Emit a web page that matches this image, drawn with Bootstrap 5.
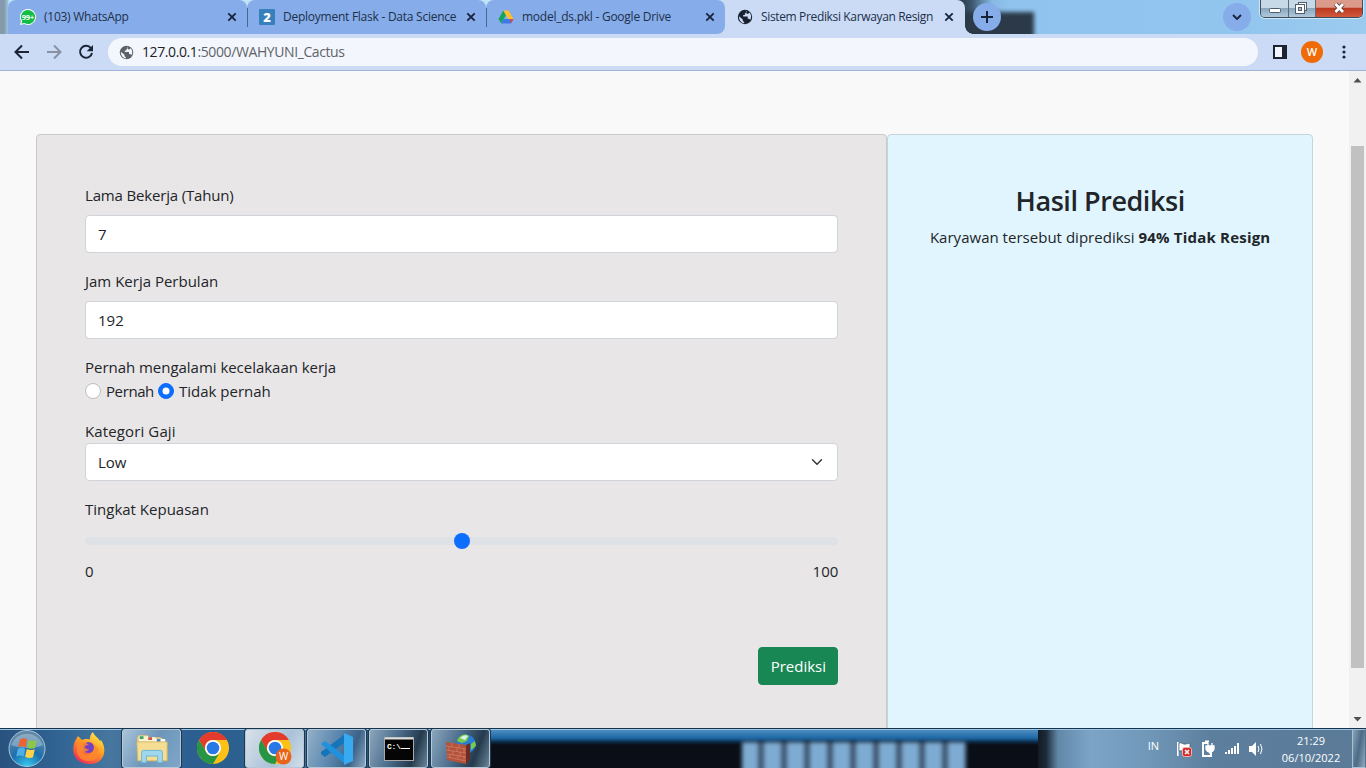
<!DOCTYPE html>
<html lang="id">
<head>
<meta charset="utf-8">
<meta name="viewport" content="width=device-width, initial-scale=1">
<title>Sistem Prediksi Karwayan Resign</title>
<link rel="stylesheet" href="https://cdn.jsdelivr.net/npm/bootstrap@5.3.0/dist/css/bootstrap.min.css">
<style>
body{font-family:"Open Sans","Noto Sans",sans-serif;font-size:15px;line-height:24px;color:#212529;width:1366px;height:768px;overflow:hidden}
.desk{height:768px}
svg{display:block;flex:none}
/* tab strip */
.strip{height:34px;background:#a5d3f3;position:relative}
.shade{position:absolute;left:955px;top:12px;width:79px;height:30px;background:#2b3948;filter:blur(2px)}
.strip-bg{background:linear-gradient(90deg,#2f4254 0 14px,#3d5870 22px,#86b8e3 42px,#90c4ef 60px,#92c5ee 70%,#9ccbef);position:absolute;left:950px;right:0;top:0;height:34px}
.clip-sky{position:absolute;inset:0;overflow:hidden}
.tab-item{width:239px;height:34px;background:#86ace9;border-radius:8px 8px 0 0;font-size:12px;color:#20304a;padding-left:12px;padding-right:10px;position:relative}
.tab-item+.tab-item:not(.on)::before{content:"";position:absolute;left:0;top:8px;width:1px;height:19px;background:#4c6590}
.tab-item.on{background:#cbdbf5;width:240px;padding-right:11px}
.tab-item.on::after{content:"";position:absolute;left:100%;bottom:0;width:8px;height:8px;background:radial-gradient(circle at 100% 0,transparent 7.5px,#cbdbf5 8px)}
.tab-item.prev{border-radius:8px 8px 8px 0}
.underlay{background:linear-gradient(90deg,#8599ac 0 4px,#9dc4dc 8px,#bfe4f7 9px 715px,#cbdbf5 715px 740px,transparent 740px);width:965px;position:relative;padding-left:8px}
.tab-text{margin-left:8px;white-space:nowrap;line-height:34px;flex:1 1 0;letter-spacing:-.25px}
.round-btn{width:28px;height:28px;border-radius:50%;background:#86ace9;position:relative}
.winctl{position:absolute;right:3px;top:0;height:18px;width:103px;border:1px solid #3d4c5c;border-top:0;border-radius:0 0 5px 5px;overflow:hidden;box-shadow:0 0 0 1px #cfe6f7}
.winctl>div{height:17px;background:linear-gradient(#c7d9e6 0 45%,#8ba7bd 50%,#b0c9dc);border-right:1px solid #5d6c7b}
.winctl>.shut{background:linear-gradient(#dc9a8b 0 42%,#bd3a20 50%,#d0593d);border:0}
/* toolbar */
.tools{height:37px;background:#cbdbf5;border-bottom:1px solid #9fb3d6}
.omni{height:28px;width:1150px;border-radius:14px;background:#f3f7fd;font-size:14px;color:#5f6368;padding-left:11px;letter-spacing:-.4px}
.omni b{font-weight:400;color:#202124}
.avatar-w{width:22px;height:22px;border-radius:50%;background:#f06a05;color:#fff;font-size:11px;font-weight:600;line-height:22px;text-align:center}
/* page */
.page{height:657px;background:#f9f9f9;overflow:hidden}
.view{padding:63px 36px 0}
.pane{height:680px;border-radius:4px;border-color:#c9c9cb;color:#212529}
.pane-form{background:#e9e6e7}
.pane-out{background:#e1f5fe;border-color:#c3d6de;text-align:center;padding:48px 16px}
.form-control,.form-select{font-size:15px;line-height:24px;border-radius:4px;height:38px;color:#212529;border-color:#ced4da}
.form-select{background-position:right 12px center}
.form-check-input{margin:4px 0 0;width:16px;height:16px;background-size:100%;flex:none}
.form-check-input:not(:checked){border-color:#bfbfbf}
.form-range{display:block;height:24px}
.form-range::-webkit-slider-runnable-track{background:#dee2e6}
.opt-text{margin-left:5px;white-space:nowrap}
.opt-first{width:48px;letter-spacing:-.4px}
.opt-next{margin-left:4px}
.scale-row{margin-top:6px;margin-bottom:64px;height:24px}
.btn-run{font-size:15px;line-height:24px;height:38px;width:80px;padding:6px 0;border-radius:4px}
.pane-out h1{font-size:27px;font-weight:600;line-height:34px;margin:1px 0 7px;letter-spacing:-.45px}
.result{letter-spacing:.02px}
.result b{letter-spacing:.2px}
.snug{letter-spacing:-.17px}
.sbar{width:17px;background:#f1f1f1}
.thumb{width:13px;height:522px;background:#c1c1c1;margin:58px auto 0}
/* taskbar */
.taskbar{height:40px;border-top:1px solid #16344d;position:relative;overflow:hidden;
 background:linear-gradient(#9dc6e4 0 1px,transparent 1px),
 linear-gradient(90deg,#29527e 0,#316493 60px,#47779f 110px,#2d5e91 190px,#2b608f 240px,#4173a1 300px,#34638e 340px,#1b4266 400px,#1f4d74 490px,transparent 500px 1030px,#12181f 1036px,#1c2a38 1046px,#6288a8 1058px,#7ba4c6 1090px,#7097b8 1150px,#5d7f9e 1210px,#5a7a97 1366px)}
.glass-dark{position:absolute;left:488px;top:1px;width:550px;height:39px;background:linear-gradient(#4c8dc1,#1d68a5 8px,#0c2a47 12px,#090e17 15px)}
.keys{position:absolute;left:742px;top:13px;width:224px;height:32px;background:repeating-linear-gradient(90deg,#7eabd2 0 15px,#33465e 18px 20px,#7eabd2 23px);filter:blur(2px)}
.task-btn{width:59px;height:39px;border:1px solid #b5c8d7;border-radius:3px;box-shadow:0 0 0 1px #1e3850;margin-right:3px}
.task-btn.pale{background:linear-gradient(120deg,#a9c3d8,#6d96ba 50%,#7ea6c8)}
.task-btn.lit{background:linear-gradient(120deg,#d8e2ea,#a9c1d8 60%,#d2dfe9)}
.task-btn.mid{background:linear-gradient(110deg,#93b0c9,#5b87ae 45%,#3c6288 75%,#8ba9c2)}
.task-btn.dim{background:linear-gradient(110deg,#8aa6bd,#496a89 45%,#253a4d 75%,#6c8599)}
.tray{color:#fff;font-size:11px;line-height:17px}
.peek{width:14px;height:39px;border:1px solid #a9c0d2;border-right-color:#587185;background:linear-gradient(100deg,#88a3b8,#4b6b86 50%,#91abc0)}
</style>
</head>
<body>
<svg width="0" height="0" class="position-absolute">
 <defs>
  <symbol id="x" viewBox="0 0 10 10"><path d="M1.300 1.300l7.400 7.400M8.700 1.300L1.300 8.700" stroke="#17233a" stroke-width="1.800" fill="none"/></symbol>
  <symbol id="globe" viewBox="0 0 16 16"><circle cx="8" cy="8" r="7.200" fill="currentColor"/><path d="M2 7.200l3.800 3.200v1.500l1.400 1v1.400C4 13.800 1.900 11 2 7.200zM8.500 1.800l1 1.400-1.600 1.300v1.400H6.200v1.500h4.500v2.300h1.500l1 1.200c1.500-2.600 1.200-5.600-.8-7.500l-1.500 1.500-1.400-.5V2z" fill="var(--hole)"/></symbol>
  <symbol id="chrome" viewBox="0 0 32 32"><circle cx="16" cy="16" r="16" fill="#fbc116"/><path d="M2.140 8A16 16 0 0 1 29.860 8H16a8 8 0 0 0-7 12z" fill="#e33b2e"/><path d="M2.140 8A16 16 0 0 0 16 32l7-12a8 8 0 0 1-13.900 0z" fill="#269546"/><circle cx="16" cy="16" r="8" fill="#fff"/><circle cx="16" cy="16" r="6.300" fill="#2878e6"/></symbol>
 </defs>
</svg>
<div class="desk d-flex flex-column">
 <header class="strip d-flex">
  <div class="clip-sky"><div class="strip-bg"></div><div class="shade"></div></div>
  <div class="underlay d-flex">
   <div class="tab-item d-flex align-items-center">
    <svg width="16" height="16" viewBox="0 0 16 16"><path d="M8 0a8 8 0 1 1-3.700 15.100L0 16l1-4A8 8 0 0 1 8 0z" fill="#f1fff4"/><path d="M8 1a7 7 0 1 1-3.500 13L1.500 14.600 2.200 12A7 7 0 0 1 8 1z" fill="#13bd45"/><text x="8" y="10.800" text-anchor="middle" font-size="7.500" font-weight="700" textLength="12.500" fill="#fff">99+</text></svg>
    <span class="tab-text">(103) WhatsApp</span><svg width="10" height="10"><use href="#x"/></svg>
   </div>
   <div class="tab-item d-flex align-items-center">
    <svg width="16" height="16" viewBox="0 0 16 16"><rect width="16" height="16" rx="1" fill="#3780bd"/><text x="8" y="12.500" text-anchor="middle" font-size="13" font-weight="800" fill="#fff">2</text></svg>
    <span class="tab-text">Deployment Flask - Data Science</span><svg width="10" height="10"><use href="#x"/></svg>
   </div>
   <div class="tab-item prev d-flex align-items-center">
    <svg width="16" height="16" viewBox="0 0 16 16"><path d="M5.300 1.500L8 6.200 3.200 14.500.5 9.900z" fill="#14a55a"/><path d="M5.300 1.500h5.300l4.900 8.400h-5.400z" fill="#fbc02d"/><path d="M5.700 9.900h9.800l-2.700 4.600H3.200z" fill="#3d7ae8"/><path d="M12.300 9.900h3.200l-2.700 4.600z" fill="#e94335"/></svg>
    <span class="tab-text">model_ds.pkl - Google Drive</span><svg width="10" height="10"><use href="#x"/></svg>
   </div>
   <div class="tab-item on d-flex align-items-center">
    <svg width="16" height="16" style="color:#172130;--hole:#cbdbf5"><use href="#globe"/></svg>
    <span class="tab-text" style="letter-spacing:-.35px">Sistem Prediksi Karwayan Resign</span><svg width="10" height="10"><use href="#x"/></svg>
   </div>
  </div>
  <div class="d-flex flex-fill pt-1">
   <div class="round-btn d-flex align-items-center justify-content-center ms-2" style="margin-top:-1px"><svg width="12" height="12" viewBox="0 0 12 12"><path d="M6 0v12M0 6h12" stroke="#17233a" stroke-width="2"/></svg></div>
   <div class="round-btn d-flex align-items-center justify-content-center ms-auto" style="margin-right:115px;margin-top:-1px"><svg width="10" height="8" viewBox="0 0 10 8"><path d="M1 2l4 4 4-4" stroke="#17233a" stroke-width="1.900" fill="none"/></svg></div>
  </div>
  <div class="winctl d-flex">
   <div style="width:28px"><svg width="27" height="17"><rect x="8.500" y="8.500" width="11" height="4" rx="1" fill="#fff" stroke="#505d6c"/></svg></div>
   <div style="width:27px"><svg width="26" height="17" fill="#fff" stroke="#505d6c"><rect x="9.500" y="2.500" width="8" height="8"/><rect x="6.500" y="4.500" width="9" height="9"/><rect x="9.500" y="7.500" width="3" height="3" fill="#a9bfd0"/></svg></div>
   <div class="shut flex-fill"><svg width="46" height="17"><path d="M19.500 4l7.500 8M27 4l-7.500 8" stroke="#5a3b3b" stroke-width="4.500"/><path d="M19.500 4l7.500 8M27 4l-7.500 8" stroke="#fff" stroke-width="2.800"/></svg></div>
  </div>
 </header>

 <div class="tools d-flex align-items-center">
  <svg width="108" height="36" viewBox="0 0 108 36" fill="none" stroke="#1c2537" stroke-width="2"><path d="M29 18H16M22 11.500L15.500 18l6.500 6.500"/><path d="M47 18h13M54 11.500l6.500 6.500-6.500 6.500" stroke="#8791a3"/><path d="M91 14.300A6 6 0 1 0 92 19"/><path d="M93 11v6.300h-6.300z" fill="#1c2537" stroke="none"/></svg>
  <div class="omni d-flex align-items-center"><svg width="15" height="15" style="color:#5c6167;--hole:#f3f7fd"><use href="#globe"/></svg><span class="ms-2"><b>127.0.0.1</b>:5000/WAHYUNI_Cactus</span></div>
  <svg width="14" height="14" viewBox="0 0 14 14" style="margin-left:15px"><rect x="1" y="1" width="12" height="12" fill="#f3f7fd" stroke="#1c2331" stroke-width="2"/><path d="M9 1h4v12H9z" fill="#1c2331"/></svg>
  <div class="avatar-w" style="margin-left:14px">W</div>
  <svg width="4" height="14" viewBox="0 0 4 14" fill="#1c2537" style="margin-left:19px"><circle cx="2" cy="2" r="1.600"/><circle cx="2" cy="7" r="1.600"/><circle cx="2" cy="12" r="1.600"/></svg>
 </div>

 <main class="page d-flex">
  <div class="view flex-fill">
   <div class="row g-0">
    <div class="col-8"><form class="card pane pane-form p-5">
     <div class="mb-3"><label class="form-label d-block mb-2 snug">Lama Bekerja (Tahun)</label><input class="form-control" value="7"></div>
     <div class="mb-3"><label class="form-label d-block mb-2">Jam Kerja Perbulan</label><input class="form-control" value="192"></div>
     <div class="mb-3"><div style="letter-spacing:-.03px">Pernah mengalami kecelakaan kerja</div>
      <div class="d-flex"><input class="form-check-input" type="radio" name="k"><label class="opt-text opt-first">Pernah</label><input class="form-check-input opt-next" type="radio" name="k" checked><label class="opt-text">Tidak pernah</label></div></div>
     <div class="mb-3"><div style="letter-spacing:.12px">Kategori Gaji</div><select class="form-select"><option>Low</option></select></div>
     <div><div class="mb-2">Tingkat Kepuasan</div><input type="range" class="form-range" min="0" max="100" value="50">
      <div class="scale-row d-flex justify-content-between"><span>0</span><span>100</span></div></div>
     <div class="text-end"><button type="button" class="btn btn-success btn-run">Prediksi</button></div>
    </form></div>
    <div class="col-4"><section class="card pane pane-out"><h1>Hasil Prediksi</h1><div class="result">Karyawan tersebut diprediksi <b>94% Tidak Resign</b></div></section></div>
   </div>
  </div>
  <div class="sbar d-flex flex-column align-items-center">
   <svg width="17" height="17"><path d="M4.500 11.500l4-4.500 4 4.500z" fill="#505050"/></svg>
   <div class="thumb"></div>
   <svg width="17" height="17" class="mt-auto"><path d="M4.500 6l4 4.500 4-4.500z" fill="#505050"/></svg>
  </div>
 </main>

 <footer class="taskbar d-flex align-items-center">
  <div class="glass-dark"></div><div class="keys"></div>
  <div class="d-flex align-items-center position-relative w-100">
   <svg width="122" height="39" viewBox="0 0 122 39">
    <defs><radialGradient id="orb" cx=".5" cy="1" r=".9"><stop offset="0" stop-color="#38cdf1"/><stop offset=".5" stop-color="#1b6fae"/><stop offset="1" stop-color="#6288a6"/></radialGradient><linearGradient id="ff" x1=".8" y1="0" x2=".2" y2="1"><stop offset="0" stop-color="#fff04d"/><stop offset=".45" stop-color="#ff9b22"/><stop offset="1" stop-color="#f5215d"/></linearGradient></defs>
    <circle cx="27" cy="19.500" r="18" fill="url(#orb)" stroke="#a5c4da"/>
    <path d="M11 16a17 17 0 0 1 32 0c-7 4-24 4-32 0z" fill="#d1e3ef" opacity=".38"/>
    <path d="M20 10.500c3-1.800 5-1.500 7.300-.2l-1.700 8c-2.500-1.500-5-1.300-7.500 0z" fill="#ed6230"/><path d="M28.600 11c3 1.500 5.500 1.200 8.200.1L35 19c-2.600 1.200-5.200 1-8-.4z" fill="#8cc64a"/><path d="M17.800 19.800c3-1.500 5-1.300 7.500.1l-1.700 7.700c-2.300-1.600-4.600-1.400-7.400 0z" fill="#50aee6"/><path d="M26.800 20c2.900 1.500 5.200 1.300 8 .2L33 28.200c-2.500 1.200-5 1-7.900-.4z" fill="#ffd248"/>
    <path d="M75 12l3-5 4 4 3-1c2-.2 4 0 5 .5-.3-3 .8-5.500 3-7.500 1 4 5 5 7 9l1-1c7 10 3 24-11 24-14 0-20-11-15-23z" fill="url(#ff)"/><circle cx="88.500" cy="18.500" r="5.500" fill="#7440c6"/><path d="M77 13c6-1 9 0 12 3-3 0-5 1-4 3 1 1 3 1 4 1-2 3-5 3-7 2 1 4 5 5 9 3 4-2 4-7 2-10l4 3c3 4 2 9-1 12-7 5-18 1-19-7z" fill="#ff8a2b" opacity=".8"/>
   </svg>
   <div class="task-btn pale d-flex align-items-center justify-content-center"><svg width="34" height="31" viewBox="0 0 36 32"><path d="M2 5l2-3h9l2 2h12l4 3v22H3z" fill="#e8c976"/><path d="M4 3h10v6H4z" fill="#fbf3d4"/><path d="M5 3h4v3H5z" fill="#38a56b"/><path d="M13 4h9v5h-9z" fill="#fbf3d4"/><path d="M14 4h4v3h-4z" fill="#d65349"/><path d="M21 6h11v4H21z" fill="#fff"/><path d="M23 6h4v3h-4z" fill="#4888bb"/><path d="M2 9h32v20H3z" fill="#f5de94" stroke="#d6b965"/><path d="M7 31V20q0-2 2-2h18q2 0 2 2v11h-5v-7H12v7z" fill="#9fd8ee" stroke="#6ab4d4"/></svg></div>
   <svg width="62" height="39" viewBox="0 0 62 39"><use href="#chrome" x="13" y="3" width="32" height="32"/></svg>
   <div class="task-btn lit d-flex align-items-center justify-content-center" style="margin-left:-1px"><svg width="34" height="34" viewBox="0 0 34 34"><use href="#chrome" x="1" y="0" width="32" height="32"/><circle cx="25.500" cy="24.500" r="8" fill="#e9641a"/><text x="25.500" y="28" text-anchor="middle" font-size="10" fill="#fff">W</text></svg></div>
   <div class="task-btn mid d-flex align-items-center justify-content-center"><svg width="34" height="34" viewBox="0 0 34 34"><path d="M24 3v8L5 25l-4-3v-2z" fill="#1674b8"/><path d="M1 12l4-3L25 24v8z" fill="#2092dd"/><path d="M24 1l9 4v24l-9 4z" fill="#37aaf0"/></svg></div>
   <div class="task-btn dim d-flex align-items-center justify-content-center"><svg width="30" height="24" viewBox="0 0 30 24"><rect x=".5" y=".5" width="29" height="23" fill="#050505" stroke="#aaa"/><path d="M1 1.500h28" stroke="#ddd" stroke-width="2"/><text x="3" y="12" font-family="Liberation Mono" font-size="8" font-weight="700" fill="#fff" textLength="14">C:\</text><path d="M17 11.500h9" stroke="#fff"/></svg></div>
   <div class="task-btn dim d-flex align-items-center justify-content-center"><svg width="34" height="34" viewBox="0 0 34 34"><circle cx="22" cy="12" r="9.500" fill="#297dd4"/><path d="M13 9c2-6 8-8 12-5l-2 5-5 2zM27 12l4-3 1 5-5 4z" fill="#77cc4b"/><path d="M16 6q4-4 8-2l-3 4z" fill="#d7f2e9"/><path d="M2 10l20 3v19L3 28z" fill="#b5523b"/><path d="M22 13l4-2v17l-4 4z" fill="#6e2d24"/><path d="M2 14l20 3M2 18l20 3M3 22l19 3M3 25l19 4M8 11v4m7-3v4M5 15v4m8-3v4m7-3v4M9 19v4m7-3v4M6 22v4m8-3v4m6-3v4" stroke="#d08c70" stroke-width=".6"/></svg></div>
   <div class="tray d-flex align-items-center ms-auto">
    <span style="margin-right:18px;margin-top:-6px">IN</span>
    <svg width="88" height="20" viewBox="0 0 88 20">
     <path d="M.8 3v14" stroke="#fff" stroke-width="1.600"/><path d="M2 4c3-1 4 2 7 1l4-1v8c-4 2-6-1-11 0z" fill="#fff" stroke="#354858" stroke-width=".6"/><rect x="5.500" y="8.500" width="9" height="9" rx="2" fill="#d32e2e" stroke="#f6b0ac"/><path d="M8 11l4 4m0-4l-4 4" stroke="#fff" stroke-width="1.500"/>
     <path d="M31 4h-5v13h8v-4M28 2.500h4" stroke="#fff" stroke-width="2" fill="none"/><path d="M29 7h8v3q-1 3-4 3t-4-3zM31 4v4m4-4v4M33 12v3" fill="#fff" stroke="#fff" stroke-width="1.300"/>
     <path d="M49 15v-2M52 15v-4M55 15V9M58 15V7M61 15V4" stroke="#fff" stroke-width="2"/>
     <path d="M72 7h3l4-4v14l-4-4h-3z" fill="#fff"/><path d="M81 7q2 3 0 6M83.500 5q3 5 0 10" stroke="#fff" fill="none"/>
    </svg>
    <div class="text-center" style="width:60px;margin:0 11px 0 16px"><div>21:29</div><div>06/10/2022</div></div>
    <div class="peek"></div>
   </div>
  </div>
 </footer>
</div>
<script src="https://cdn.jsdelivr.net/npm/bootstrap@5.3.0/dist/js/bootstrap.bundle.min.js"></script>
</body>
</html>
